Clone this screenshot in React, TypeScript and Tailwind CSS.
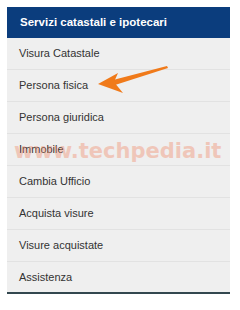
import React from "react";

const items = [
  "Visura Catastale",
  "Persona fisica",
  "Persona giuridica",
  "Immobile",
  "Cambia Ufficio",
  "Acquista visure",
  "Visure acquistate",
  "Assistenza",
];

export default function App() {
  return (
    <div className="relative w-[240px] h-[310px] bg-white overflow-hidden" style={{ fontFamily: '"Liberation Sans", Arial, sans-serif' }}>
      <div className="absolute left-0 top-0 w-full pt-[7px] px-[7px]">
        <div className="w-[223px] flex flex-col">
          <div className="h-[31px] bg-[#0b3d7d] flex items-center pl-[13px] text-white font-bold text-[11.5px]">
            Servizi catastali e ipotecari
          </div>
          {items.map((t, i) => (
            <div
              key={t}
              className={
                i === items.length - 1
                  ? "h-[32px] bg-[#efefef] flex items-center pl-[12px] text-[11px] text-[#333333] border-b-[2px] border-[#33474f]"
                  : "h-[32px] bg-[#efefef] flex items-center pl-[12px] text-[11px] text-[#333333] border-b border-[#e2e2e2]"
              }
            >
              {t}
            </div>
          ))}
        </div>
      </div>
      <div
        className="absolute left-[14px] top-[141px] text-[21px] leading-none font-bold text-[#f08a6a] opacity-40 whitespace-nowrap pointer-events-none"
        style={{ fontFamily: '"DejaVu Sans", sans-serif' }}
      >
        www.techpedia.it
      </div>
      <svg className="absolute left-0 top-0 pointer-events-none" width="240" height="310">
        <polygon points="113,80 167,66 168,68 115,85" fill="#f07a1a" />
        <polygon points="98,84 118,73 114,82 123,93" fill="#f07a1a" />
      </svg>
    </div>
  );
}
